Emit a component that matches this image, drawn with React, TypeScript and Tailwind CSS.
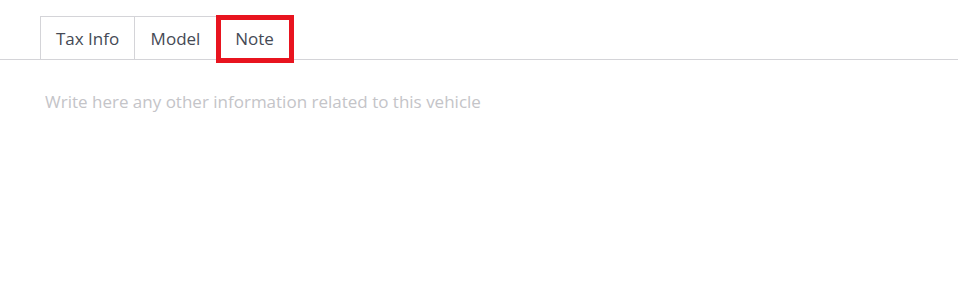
const TABS = [
  { label: 'Tax Info', width: 'w-[94px]' },
  { label: 'Model', width: 'w-[82px]' },
  { label: 'Note', width: 'w-[77px]' },
];

export default function App() {
  const active = 'Note';
  return (
    <div className="min-h-[298px] bg-white pt-4" style={{ fontFamily: '"Open Sans", "Noto Sans", sans-serif' }}>
      {/* Notebook tabs */}
      <div className="flex border-b border-[#d4d4d8] pl-10">
        {TABS.map((tab) => (
          <div
            key={tab.label}
            className={
              'relative -mb-px h-11 flex items-center justify-center pt-[2px] text-[17px] text-[#454a55] ' +
              tab.width +
              (tab.label === active
                ? ' bg-white border border-transparent border-b-white'
                : ' border border-[#d4d4d8] border-r-0')
            }
          >
            {tab.label}
            {tab.label === active && (
              <span className="absolute -top-[2px] -bottom-[4px] -left-px -right-[2px] border-[5px] border-[#e8141f]" />
            )}
          </div>
        ))}
      </div>

      {/* Note body */}
      <div className="px-[45px] pt-[29px]">
        <textarea
          className="w-full resize-none bg-transparent text-[17px] text-[#454a55] outline-none placeholder:text-[#c4c4c8]"
          placeholder="Write here any other information related to this vehicle"
          rows={3}
        />
      </div>
    </div>
  );
}
